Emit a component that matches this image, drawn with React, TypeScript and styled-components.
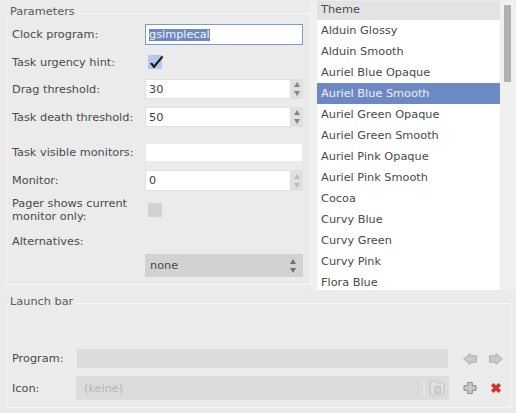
import React from 'react';
import styled, { createGlobalStyle } from 'styled-components';

const themes = [
	'Alduin Glossy',
	'Alduin Smooth',
	'Auriel Blue Opaque',
	'Auriel Blue Smooth',
	'Auriel Green Opaque',
	'Auriel Green Smooth',
	'Auriel Pink Opaque',
	'Auriel Pink Smooth',
	'Cocoa',
	'Curvy Blue',
	'Curvy Green',
	'Curvy Pink',
	'Flora Blue',
];

const GlobalStyle = createGlobalStyle`
	html, body {
		margin: 0;
		padding: 0;
		background: #ebebeb;
	}
	* {
		box-sizing: border-box;
	}
`;

const Page = styled.div`
	width: 516px;
	height: 413px;
	overflow: hidden;
	display: flex;
	flex-direction: column;
	font-family: "DejaVu Sans", sans-serif;
	font-size: 11.3px;
	color: #4a4a4a;
	background: #ebebeb;
`;

const TopRow = styled.div`
	display: flex;
	height: 290px;
`;

const Group = styled.fieldset`
	margin: 0;
	padding: 0;
	border: 1px solid #f6f6f6;
	min-width: 0;
`;

const Legend = styled.legend`
	padding: 0 2px 4px 3px;
	margin: 0;
	font-size: 11.3px;
	line-height: 13px;
	color: #5a5a5a;
`;

const ParamsGroup = styled(Group)`
	width: 305px;
	height: 280px;
	margin: 5px 0 0 6px;
	flex: none;
`;

const Form = styled.div`
	display: flex;
	flex-direction: column;
	padding: 2px 0 0 5px;
`;

const Row = styled.div<{ $height: number; $top?: number }>`
	display: flex;
	align-items: center;
	height: ${props => props.$height}px;
	margin-top: ${props => props.$top || 0}px;
`;

const Label = styled.div`
	width: 133px;
	flex: none;
	line-height: 13px;
`;

const LineEdit = styled.div<{ $focused?: boolean }>`
	width: 158px;
	height: 100%;
	background: #fff;
	background-clip: padding-box;
	display: flex;
	align-items: center;
	padding-left: 3px;
	border: 1px solid ${props => props.$focused ? '#7b9bd8' : 'transparent'};
	color: #3c3c3c;
`;

const Selected = styled.span`
	background: #6c89c6;
	color: #f4f4f4;
	line-height: 12px;
`;

const CheckBox = styled.div<{ $checked?: boolean }>`
	width: 14px;
	height: 14px;
	margin-left: 3px;
	background: ${props => props.$checked ? '#b5c8ea' : '#d2d2d2'};
`;

const CheckMark = styled.svg`
	display: block;
	overflow: visible;
`;

const SpinBox = styled.div`
	width: 158px;
	height: 100%;
	display: flex;
	background: #e0e0e0;
`;

const SpinField = styled.div`
	width: 144px;
	margin: 1px 0 1px 1px;
	background: #fff;
	display: flex;
	align-items: center;
	padding-left: 3px;
	color: #3c3c3c;
`;

const SpinButtons = styled.div<{ $disabled?: boolean }>`
	flex: 1;
	display: flex;
	flex-direction: column;
	align-items: center;
	justify-content: center;
	gap: 4px;
	color: ${props => props.$disabled ? '#bcbcbc' : '#858585'};
`;

const Arrow = styled.svg`
	display: block;
	fill: currentColor;
`;

const Combo = styled.div`
	width: 158px;
	height: 100%;
	background: #d2d2d2;
	display: flex;
	align-items: center;
	justify-content: space-between;
	padding: 0 7px 0 5px;
	color: #4a4a4a;
`;

const ComboArrows = styled(SpinButtons)`
	flex: none;
	color: #707070;
`;

const ThemeColumn = styled.div`
	width: 204px;
	height: 289px;
	margin-top: 1px;
	display: flex;
	padding-left: 6px;
	background: #f0f0f0;
`;

const ThemeList = styled.div`
	width: 183px;
	height: 100%;
	background: #fff;
	overflow: hidden;
`;

const ThemeHeader = styled.div`
	height: 19px;
	background: #e3e3e3;
	padding-left: 4px;
	line-height: 18px;
`;

const ThemeItem = styled.div<{ $selected?: boolean }>`
	height: 21px;
	line-height: 21px;
	padding-left: 4px;
	white-space: nowrap;
	background: ${props => props.$selected ? '#6c89c6' : 'transparent'};
	color: ${props => props.$selected ? '#f0f0f0' : '#4a4a4a'};
`;

const ScrollTrack = styled.div`
	flex: 1;
	padding: 4px 4px 0 4px;
`;

const ScrollThumb = styled.div`
	width: 7px;
	height: 77px;
	background: #b0b0b0;
`;

const LaunchGroup = styled(Group)`
	width: 505px;
	height: 113px;
	margin: 5px 0 0 6px;
`;

const LaunchBody = styled.div`
	display: flex;
	flex-direction: column;
	gap: 8px;
	padding: 37px 0 0 5px;
`;

const LaunchRow = styled.div<{ $height: number }>`
	display: flex;
	align-items: center;
	height: ${props => props.$height}px;
`;

const LaunchLabel = styled.div<{ $width: number }>`
	width: ${props => props.$width}px;
	flex: none;
`;

const ProgramField = styled.div`
	width: 371px;
	height: 100%;
	background: #dcdcdc;
`;

const IconField = styled.div`
	width: 373px;
	height: 100%;
	background: #dcdcdc;
	display: flex;
	align-items: center;
	justify-content: space-between;
	padding: 0 4px 0 8px;
	color: #b4b4b4;
`;

const FolderPart = styled.div`
	display: flex;
	align-items: center;
	gap: 4px;
	height: 16px;
`;

const Separator = styled.div`
	width: 2px;
	height: 100%;
	background: #e6e6e6;
`;

const IconButtons = styled.div<{ $left: number }>`
	display: flex;
	align-items: center;
	gap: 12px;
	margin-left: ${props => props.$left}px;
`;

const ToolIcon = styled.svg<{ $flip?: boolean }>`
	display: block;
	flex: none;
	transform: ${props => props.$flip ? 'scaleX(-1)' : 'none'};
`;

const UpDown = () => (
	<>
		<Arrow width="6" height="5" viewBox="0 0 6 5"><path d="M3 0L6 5H0z" /></Arrow>
		<Arrow width="6" height="5" viewBox="0 0 6 5"><path d="M0 0H6L3 5z" /></Arrow>
	</>
);

const Spin = ({ value, disabled }: { value: string; disabled?: boolean }) => (
	<SpinBox>
		<SpinField>{value}</SpinField>
		<SpinButtons $disabled={disabled}>
			<UpDown />
		</SpinButtons>
	</SpinBox>
);

const ArrowIcon = ({ flip }: { flip?: boolean }) => (
	<ToolIcon $flip={flip} width="14" height="12" viewBox="0 0 14 12">
		<path d="M0.7 6L7 0.6V2.8H13.4V9.2H7V11.4z" fill="#c9c9c9" stroke="#adadad" />
	</ToolIcon>
);

const App = () => (
	<Page>
		<GlobalStyle />
		<TopRow>
			<ParamsGroup>
				<Legend>Parameters</Legend>
				<Form>
					<Row $height={21}>
						<Label>Clock program:</Label>
						<LineEdit $focused><Selected>gsimplecal</Selected></LineEdit>
					</Row>
					<Row $height={20} $top={7}>
						<Label>Task urgency hint:</Label>
						<CheckBox $checked>
							<CheckMark width="14" height="14" viewBox="0 0 14 14">
								<path d="M2 8.5L4 7.5L6 10L13.5 1L15.5 2L6 13.5z" fill="#1c1c1c" />
							</CheckMark>
						</CheckBox>
					</Row>
					<Row $height={20} $top={7}>
						<Label>Drag threshold:</Label>
						<Spin value="30" />
					</Row>
					<Row $height={20} $top={8}>
						<Label>Task death threshold:</Label>
						<Spin value="50" />
					</Row>
					<Row $height={19} $top={16}>
						<Label>Task visible monitors:</Label>
						<LineEdit />
					</Row>
					<Row $height={21} $top={8}>
						<Label>Monitor:</Label>
						<Spin value="0" disabled />
					</Row>
					<Row $height={26} $top={6}>
						<Label>Pager shows current monitor only:</Label>
						<CheckBox />
					</Row>
					<Row $height={14} $top={11}>
						<Label>Alternatives:</Label>
					</Row>
					<Row $height={23} $top={6}>
						<Label />
						<Combo>
							none
							<ComboArrows><UpDown /></ComboArrows>
						</Combo>
					</Row>
				</Form>
			</ParamsGroup>
			<ThemeColumn>
				<ThemeList>
					<ThemeHeader>Theme</ThemeHeader>
					{themes.map(theme => (
						<ThemeItem key={theme} $selected={theme === 'Auriel Blue Smooth'}>{theme}</ThemeItem>
					))}
				</ThemeList>
				<ScrollTrack><ScrollThumb /></ScrollTrack>
			</ThemeColumn>
		</TopRow>
		<LaunchGroup>
			<Legend>Launch bar</Legend>
			<LaunchBody>
				<LaunchRow $height={19}>
					<LaunchLabel $width={65}>Program:</LaunchLabel>
					<ProgramField />
					<IconButtons $left={15}>
						<ArrowIcon />
						<ArrowIcon flip />
					</IconButtons>
				</LaunchRow>
				<LaunchRow $height={24}>
					<LaunchLabel $width={64}>Icon:</LaunchLabel>
					<IconField>
						(keine)
						<FolderPart>
							<Separator />
							<ToolIcon width="16" height="16" viewBox="0 0 16 16">
								<path d="M1 3C1 1.5 2 1 3 1H7L8.5 3H13C14.5 3 15 4 15 5V13C15 14.5 14.5 15 13 15H3C2 15 1 14.5 1 13z" fill="#e2e2e2" stroke="#c4c4c4" strokeWidth="1.2" />
								<rect x="6" y="6.5" width="5.5" height="6.5" fill="#d4d4d4" stroke="#bdbdbd" />
							</ToolIcon>
						</FolderPart>
					</IconField>
					<IconButtons $left={14}>
						<ToolIcon width="14" height="14" viewBox="0 0 14 14">
							<path d="M4.7 1.5H9.3V4.7H13V9.3H9.3V12.5H4.7V9.3H1V4.7H4.7z" fill="#c6c6c6" stroke="#8a8a8a" />
						</ToolIcon>
						<ToolIcon width="14" height="14" viewBox="0 0 14 14">
							<path d="M3.2 3.2L10.8 10.8M10.8 3.2L3.2 10.8" fill="none" stroke="#d8302f" strokeWidth="3.6" />
						</ToolIcon>
					</IconButtons>
				</LaunchRow>
			</LaunchBody>
		</LaunchGroup>
	</Page>
);

export default App;
